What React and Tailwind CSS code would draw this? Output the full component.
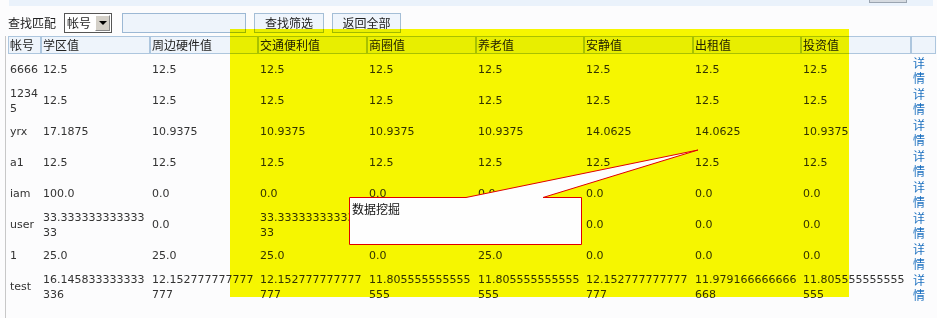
const headers = ["帐号", "学区值", "周边硬件值", "交通便利值", "商圈值", "养老值", "安静值", "出租值", "投资值", ""];
const widths = ["w-[33px]", "w-[109px]", "w-[108px]", "w-[109px]", "w-[109px]", "w-[108px]", "w-[109px]", "w-[108px]", "w-[110px]", "w-[25px]"];

const rows = [
  ["6666", "12.5", "12.5", "12.5", "12.5", "12.5", "12.5", "12.5", "12.5"],
  ["12345", "12.5", "12.5", "12.5", "12.5", "12.5", "12.5", "12.5", "12.5"],
  ["yrx", "17.1875", "10.9375", "10.9375", "10.9375", "10.9375", "14.0625", "14.0625", "10.9375"],
  ["a1", "12.5", "12.5", "12.5", "12.5", "12.5", "12.5", "12.5", "12.5"],
  ["iam", "100.0", "0.0", "0.0", "0.0", "0.0", "0.0", "0.0", "0.0"],
  ["user", "33.33333333333333", "0.0", "33.33333333333333", "0.0", "0.0", "0.0", "0.0", "0.0"],
  ["1", "25.0", "25.0", "25.0", "0.0", "25.0", "0.0", "0.0", "0.0"],
  ["test", "16.145833333333336", "12.152777777777777", "12.152777777777777", "11.805555555555555", "11.805555555555555", "12.152777777777777", "11.979166666666668", "11.805555555555555"],
];

export default function App() {
  return (
    <div className="relative w-[937px] h-[318px] overflow-hidden bg-[#fcfcfd] flex flex-col font-['Noto_Sans_CJK_SC',sans-serif] text-[12px] text-[#222]">
      {/* top band */}
      <div className="relative ml-[9px] w-[924px] h-[6px] bg-[#eaf2fb] shrink-0">
        <div className="absolute left-[860px] top-0 w-[38px] h-[3px] bg-[#d6dbe1] border-x border-b border-[#9aa4b0]" />
      </div>

      {/* search bar */}
      <div className="flex items-center mt-[7px] h-[20px] pl-[8px] shrink-0">
        <span className="leading-[20px]">查找匹配</span>
        <div className="ml-[8px] w-[48px] h-[20px] flex items-center border border-[#555] bg-white">
          <span className="pl-[2px] flex-1 leading-[16px]">帐号</span>
          <span className="w-[15px] h-[16px] mr-[1px] bg-[#d4d0c8] border border-t-white border-l-white border-b-[#888] border-r-[#888] flex items-center justify-center">
            <span className="w-0 h-0 border-l-[4px] border-r-[4px] border-t-[4px] border-l-transparent border-r-transparent border-t-black" />
          </span>
        </div>
        <div className="ml-[10px] w-[124px] h-[20px] border border-[#9cb8d4] bg-[#eef4fb]" />
        <button className="ml-[8px] w-[70px] h-[20px] border border-[#a4bed6] bg-[#eff5fc] leading-[18px]">查找筛选</button>
        <button className="ml-[8px] w-[69px] h-[20px] border border-[#a4bed6] bg-[#eff5fc] leading-[18px]">返回全部</button>
      </div>

      {/* table */}
      <div className="flex-1 mt-[3px] ml-[5px] border-l border-[#c8c8c8] pl-[2px]">
        <table className="table-fixed border-separate border-spacing-0 w-[928px]">
          <thead>
            <tr className="h-[18px]">
              {headers.map((h, i) => (
                <th
                  key={i}
                  className={`${widths[i]} p-0 pl-[1px] text-left font-normal leading-[16px] bg-[#eef4fb] border border-[#adc6de] whitespace-nowrap overflow-hidden`}
                >
                  {h}
                </th>
              ))}
            </tr>
          </thead>
          <tbody className="font-['DejaVu_Sans','Noto_Sans_CJK_SC',sans-serif] text-[11px] text-[#333]">
            {rows.map((r, ri) => (
              <tr key={ri} className="h-[31px]">
                {r.map((c, ci) => (
                  <td key={ci} className="p-0 pl-[2px] pr-[3px] align-middle leading-[15px] break-all">
                    {c}
                  </td>
                ))}
                <td className="p-0 pl-[2px] align-middle leading-[15px] text-[12px] text-[#1b6fbf] font-['Noto_Sans_CJK_SC',sans-serif]">
                  <div className="h-[15px]">详</div>
                  <div className="h-[15px]">情</div>
                </td>
              </tr>
            ))}
          </tbody>
        </table>
      </div>

      {/* yellow highlight */}
      <div className="absolute left-[230px] top-[29px] w-[619px] h-[268px] bg-[#f9f900] mix-blend-multiply pointer-events-none" />

      {/* callout */}
      <svg className="absolute left-0 top-0 pointer-events-none" width="937" height="318">
        <path
          d="M349.5 197.5 L466 197.5 L698 150 L543 197.5 L581.5 197.5 L581.5 244.5 L349.5 244.5 Z"
          fill="#fefefe"
          stroke="#e00000"
          strokeWidth="1"
        />
      </svg>
      <div className="absolute left-[352px] top-[201px] text-[12px] leading-[16px] text-[#111]">数据挖掘</div>
    </div>
  );
}
